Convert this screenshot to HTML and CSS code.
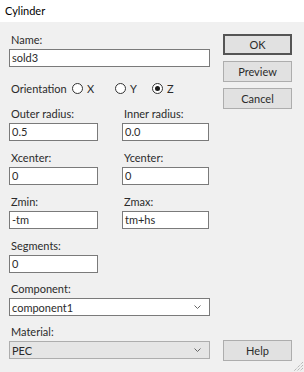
FILE: index.html
```html
<!DOCTYPE html>
<html>
<head>
  <title>Cylinder</title>
  <link rel="stylesheet" href="styles.css">
</head>
<body>
  <div class="titlebar">Cylinder</div>

  <div class="dialog">
    <!-- Left side: the form fields -->
    <div class="form">
      <label class="lbl">Name:</label>
      <div class="field wide">sold3</div>

      <div class="orient">
        <span class="orient-lbl">Orientation</span>
        <span class="opt opt-x"><span class="radio"></span>X</span>
        <span class="opt opt-y"><span class="radio"></span>Y</span>
        <span class="opt"><span class="radio checked"></span>Z</span>
      </div>

      <div class="pair">
        <div>
          <label class="lbl">Outer radius:</label>
          <div class="field">0.5</div>
        </div>
        <div>
          <label class="lbl">Inner radius:</label>
          <div class="field">0.0</div>
        </div>
      </div>

      <div class="pair">
        <div>
          <label class="lbl">Xcenter:</label>
          <div class="field">0</div>
        </div>
        <div>
          <label class="lbl">Ycenter:</label>
          <div class="field">0</div>
        </div>
      </div>

      <div class="pair">
        <div>
          <label class="lbl">Zmin:</label>
          <div class="field">-tm</div>
        </div>
        <div>
          <label class="lbl">Zmax:</label>
          <div class="field">tm+hs</div>
        </div>
      </div>

      <div class="pair last">
        <div>
          <label class="lbl">Segments:</label>
          <div class="field">0</div>
        </div>
      </div>

      <label class="lbl">Component:</label>
      <div class="combo">
        <span>component1</span>
        <svg width="7" height="4" viewBox="0 0 7 4"><path d="M0.5 0.5 L3.5 3.5 L6.5 0.5" fill="none" stroke="#666" stroke-width="1"/></svg>
      </div>

      <label class="lbl">Material:</label>
      <div class="combo ro">
        <span>PEC</span>
        <svg width="7" height="4" viewBox="0 0 7 4"><path d="M0.5 0.5 L3.5 3.5 L6.5 0.5" fill="none" stroke="#666" stroke-width="1"/></svg>
      </div>
    </div>

    <!-- Right side: buttons -->
    <div class="buttons">
      <div class="btn-stack">
        <button class="btn default">OK</button>
        <button class="btn">Preview</button>
        <button class="btn">Cancel</button>
      </div>
      <button class="btn help">Help</button>
    </div>
  </div>

  <svg class="grip" width="10" height="10" viewBox="0 0 10 10">
    <path d="M9 3 L3 9 M9 6 L6 9 M9 0 L0 9" stroke="#a0a0a0" stroke-width="1" stroke-dasharray="1 1"/>
  </svg>
</body>
</html>
```

FILE: styles.css
```css
body {
  margin: 0;
  width: 304px;
  height: 372px;
  background-color: #f0f0f0;
  font-family: 'Lato', sans-serif;
  font-size: 11px;
  color: #2b2b2b;
  position: relative;
  overflow: hidden;
}
.titlebar {
  background-color: #fff;
  height: 22px;
  line-height: 22px;
  padding-left: 5px;
  color: #000;
}
.dialog {
  display: flex;
  padding: 11px 0 0 9px;
}
.form {
  width: 201px;
  display: flex;
  flex-direction: column;
}
.lbl {
  display: block;
  height: 14px;
  line-height: 14px;
  padding-left: 2px;
  margin-bottom: 2px;
}
.field {
  box-sizing: border-box;
  height: 18px;
  line-height: 16px;
  background-color: #fff;
  border: 1px solid #7a7a7a;
  padding-left: 2px;
  width: 89px;
  margin-bottom: 12px;
}
.field.wide {
  width: 201px;
}
.pair {
  display: grid;
  grid-template-columns: 89px 87px;
  column-gap: 24px;
}
.pair .field {
  width: 100%;
  margin-bottom: 10px;
}
.pair.last .field {
  margin-bottom: 9px;
}
.orient {
  display: flex;
  align-items: center;
  height: 14px;
  margin: 2px 0 12px 2px;
}
.orient-lbl {
  width: 61px;
}
.opt {
  display: flex;
  align-items: center;
}
.opt-x {
  width: 43px;
}
.opt-y {
  width: 37px;
}
.radio {
  box-sizing: border-box;
  width: 11px;
  height: 11px;
  border: 1px solid #333;
  border-radius: 50%;
  background-color: #fff;
  margin-right: 4px;
  position: relative;
}
.radio.checked::after {
  content: '';
  position: absolute;
  left: 2px;
  top: 2px;
  width: 5px;
  height: 5px;
  border-radius: 50%;
  background-color: #1a1a1a;
}
.combo {
  box-sizing: border-box;
  height: 18px;
  background-color: #fff;
  border: 1px solid #7a7a7a;
  display: flex;
  align-items: center;
  justify-content: space-between;
  padding: 0 8px 0 2px;
  margin-bottom: 9px;
}
.combo.ro {
  background-color: #e5e5e5;
  border-color: #adadad;
}
.buttons {
  margin-left: 13px;
  width: 69px;
  display: flex;
  flex-direction: column;
  justify-content: space-between;
  padding-top: 1px;
  height: 327px;
}
.btn-stack {
  display: flex;
  flex-direction: column;
  gap: 6px;
}
.btn {
  box-sizing: border-box;
  width: 69px;
  height: 21px;
  background-color: #e1e1e1;
  border: 1px solid #adadad;
  font-family: 'Lato', sans-serif;
  font-size: 11px;
  color: #2b2b2b;
  padding: 0;
}
.btn.default {
  border: 2px solid #555;
}
.grip {
  position: absolute;
  right: 0;
  bottom: 0;
}
```
